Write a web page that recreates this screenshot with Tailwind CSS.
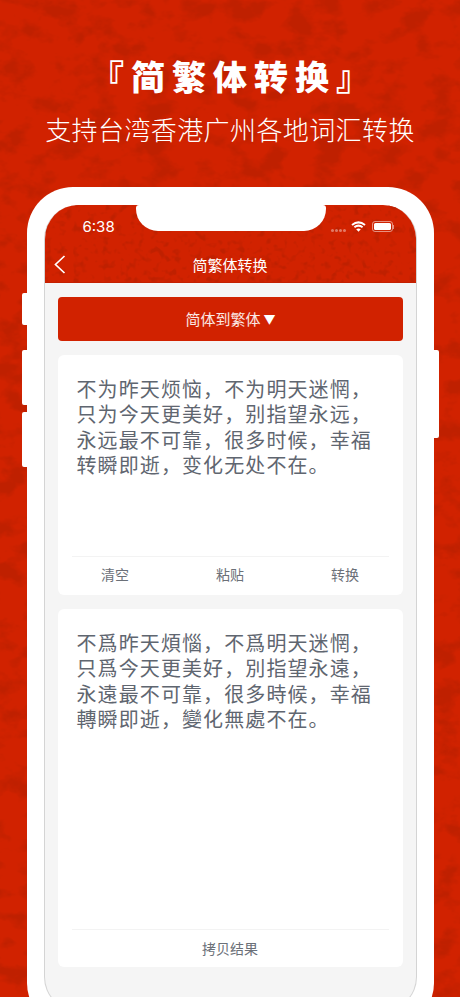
<!DOCTYPE html>
<html lang="zh-CN">
<head>
  <meta charset="UTF-8">
  <meta name="viewport" content="width=device-width, initial-scale=1.0">
  <title>简繁体转换</title>
  <script src="https://cdn.jsdelivr.net/npm/@tailwindcss/browser@4"></script>
</head>
<body class="m-0 bg-[#d12200] font-['Noto_Sans_CJK_SC','Noto_Sans',sans-serif]">
  <div class="relative w-[460px] h-[997px] overflow-hidden bg-[#d12200]">
    <!-- stone rubbing texture behind everything -->
    <svg class="absolute inset-0" width="460" height="997">
      <filter id="rub" x="0" y="0" width="100%" height="100%" color-interpolation-filters="sRGB">
        <feTurbulence type="fractalNoise" baseFrequency="0.035 0.05" numOctaves="4" seed="7"/>
        <feColorMatrix type="matrix" values="0 0 0 0 0.75  0 0 0 0 0.125  0 0 0 0 0  3 3 0 0 -2.85"/>
      </filter>
      <rect width="460" height="997" filter="url(#rub)"/>
    </svg>

    <div class="relative flex flex-col items-center">
      <h1 class="mt-[52px] h-[48px] leading-[48px] text-[34px] font-black tracking-[7px] pl-[7px] text-white whitespace-nowrap">『简繁体转换』</h1>
      <p class="mt-[7px] h-[44px] leading-[44px] text-[26px] font-light tracking-[0.4px] text-white whitespace-nowrap">支持台湾香港广州各地词汇转换</p>

      <!-- phone -->
      <div class="relative mt-[36px] w-[407px] h-[842px] bg-white rounded-[46px] pt-[18px] pb-[18px] pl-[17px] pr-[17px]">
        <span class="absolute left-[-5px] top-[106px] w-[5px] h-[32px] bg-white rounded-l-[2px]"></span>
        <span class="absolute left-[-5px] top-[163px] w-[5px] h-[55px] bg-white rounded-l-[2px]"></span>
        <span class="absolute left-[-5px] top-[225px] w-[5px] h-[55px] bg-white rounded-l-[2px]"></span>
        <span class="absolute right-[-5px] top-[163px] w-[5px] h-[88px] bg-white rounded-r-[2px]"></span>

        <div class="relative h-full bg-[#f5f5f5] rounded-[34px] overflow-hidden border-x border-b border-[#d4d4d4]">
          <!-- notch -->
          <div class="absolute left-[91px] top-0 z-10 w-[190px] h-[26px] bg-white rounded-b-[22px] rounded-t-[3px]"></div>

          <header class="relative h-[78px] bg-[#d12200] overflow-hidden border-b border-[#c41f00]">
            <svg class="absolute inset-0" width="373" height="78">
              <filter id="rub2" x="0" y="0" width="100%" height="100%" color-interpolation-filters="sRGB">
                <feTurbulence type="fractalNoise" baseFrequency="0.14" numOctaves="2" seed="3"/>
                <feColorMatrix type="matrix" values="0 0 0 0 0.75  0 0 0 0 0.125  0 0 0 0 0  3 3 0 0 -3.1"/>
              </filter>
              <rect width="373" height="78" filter="url(#rub2)"/>
            </svg>
            <div class="relative flex items-center justify-between h-[41px] pl-[38px] pr-[22px] pt-[1px]">
              <span class="text-[15px] font-['Inter'] text-white mt-[2px]">6:38</span>
              <div class="flex items-center gap-[5px] mt-[1px]">
                <span class="flex gap-[1.5px] mt-[8px]">
                  <i class="w-[2.5px] h-[2.5px] rounded-full bg-white/40"></i>
                  <i class="w-[2.5px] h-[2.5px] rounded-full bg-white/40"></i>
                  <i class="w-[2.5px] h-[2.5px] rounded-full bg-white/40"></i>
                  <i class="w-[2.5px] h-[2.5px] rounded-full bg-white/40"></i>
                </span>
                <svg width="15" height="11" viewBox="0 0 15 11" fill="none" stroke="#fff" stroke-width="2">
                  <path d="M1 4 Q7.5 -1.2 14 4"/>
                  <path d="M3.4 6.3 Q7.5 3 11.6 6.3"/>
                  <path d="M7.5 10.8 L5.2 8.2 Q7.5 6.8 9.8 8.2 Z" fill="#fff" stroke="none"/>
                </svg>
                <span class="flex items-center ml-[1px]">
                  <span class="block w-[21px] h-[11px] rounded-[3px] border border-white/50 p-[1px]"><span class="block h-full bg-white rounded-[1.5px]"></span></span>
                  <span class="block w-[1px] h-[4px] bg-white/50"></span>
                </span>
              </div>
            </div>
            <div class="relative flex items-center justify-center h-[37px] pt-[1px]">
              <svg class="absolute left-[9px] top-[9px]" width="12" height="19" viewBox="0 0 12 19" fill="none" stroke="#fff" stroke-width="1.7">
                <path d="M10.5 1 L1.5 9.5 L10.5 18"/>
              </svg>
              <span class="text-[15px] text-white">简繁体转换</span>
            </div>
          </header>

          <main class="flex flex-col gap-[14px] px-[13px] pt-[14px]">
            <button class="h-[44px] w-full rounded-[4px] bg-[#d12200] text-[15px] text-white/90 flex items-center justify-center gap-[3px] pl-[1px]">简体到繁体 <span class="text-[12px] text-white">▼</span></button>

            <section class="h-[240px] flex flex-col bg-white rounded-[6px]">
              <p class="flex-1 pt-[21px] px-[19px] text-[20px] leading-[25.3px] tracking-[1.1px] text-[#5f6670]">不为昨天烦恼，不为明天迷惘，只为今天更美好，别指望永远，永远最不可靠，很多时候，幸福转瞬即逝，变化无处不在。</p>
              <div class="mx-[14px] h-px bg-[#f3f3f3]"></div>
              <div class="h-[38px] flex items-center pb-[3px] text-[14px] text-[#6b7078]">
                <span class="flex-1 text-center">清空</span>
                <span class="flex-1 text-center">粘贴</span>
                <span class="flex-1 text-center">转换</span>
              </div>
            </section>

            <section class="h-[358px] flex flex-col bg-white rounded-[6px]">
              <p class="flex-1 pt-[21px] px-[19px] text-[20px] leading-[25.3px] tracking-[1.1px] text-[#5f6670] font-['Noto_Sans_CJK_TC','Noto_Sans_CJK_SC',sans-serif]">不爲昨天煩惱，不爲明天迷惘，只爲今天更美好，別指望永遠，永遠最不可靠，很多時候，幸福轉瞬即逝，變化無處不在。</p>
              <div class="mx-[14px] h-px bg-[#f3f3f3]"></div>
              <div class="h-[37px] flex items-center justify-center pb-[1px] text-[14px] text-[#6b7078]">拷贝结果</div>
            </section>
          </main>
        </div>
      </div>
    </div>
  </div>
</body>
</html>
